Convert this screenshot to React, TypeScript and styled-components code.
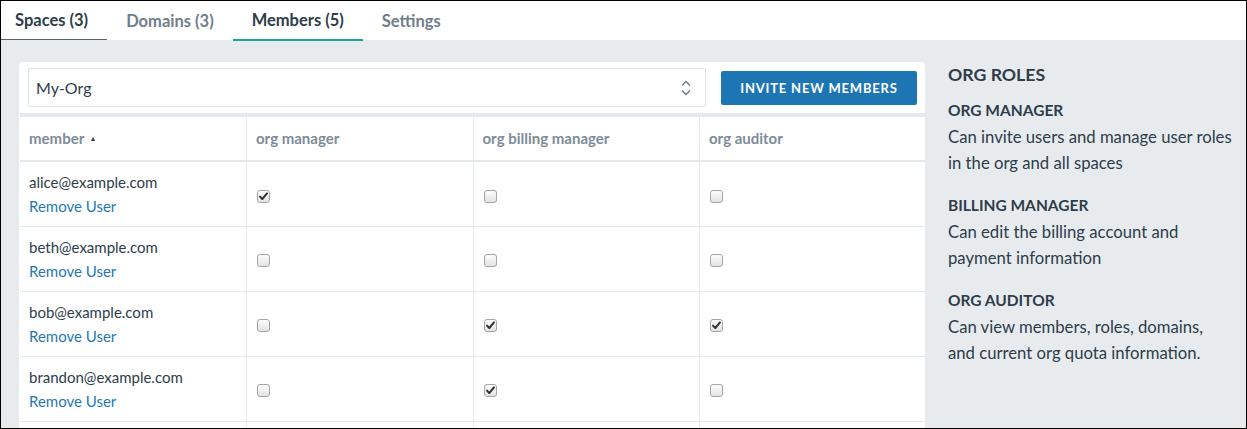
import { styled, createGlobalStyle } from 'styled-components'

const GlobalStyle = createGlobalStyle`
  html, body {
    margin: 0;
    padding: 0;
    background: #fff;
  }
  body {
    font-family: Lato, "Noto Sans", "Liberation Sans", sans-serif;
    color: #2e3d4a;
  }
  * {
    box-sizing: border-box;
  }
`

type Member = {
  email: string
  manager: boolean
  billing: boolean
  auditor: boolean
}

const members: Member[] = [
  { email: 'alice@example.com', manager: true, billing: false, auditor: false },
  { email: 'beth@example.com', manager: false, billing: false, auditor: false },
  { email: 'bob@example.com', manager: false, billing: true, auditor: true },
  { email: 'brandon@example.com', manager: false, billing: true, auditor: false },
  { email: 'carol@example.com', manager: false, billing: false, auditor: false },
]

const roles = [
  {
    title: 'ORG MANAGER',
    text: 'Can invite users and manage user roles in the org and all spaces',
  },
  {
    title: 'BILLING MANAGER',
    text: 'Can edit the billing account and payment information',
  },
  {
    title: 'ORG AUDITOR',
    text: 'Can view members, roles, domains, and current org quota information.',
  },
]

function Checkbox({ checked }: { checked: boolean }) {
  return (
    <Box>
      {checked && (
        <svg width="11" height="11" viewBox="0 0 11 11">
          <path d="M2 5.6 L4.3 8 L9 2.4" fill="none" stroke="#333" strokeWidth="2" strokeLinecap="round" strokeLinejoin="round" />
        </svg>
      )}
    </Box>
  )
}

function App() {
  return (
    <Frame>
      <GlobalStyle />
      <Tabs>
        <Tab $first $state="muted-active">Spaces (3)</Tab>
        <Tab>Domains (3)</Tab>
        <Tab $state="active">Members (5)</Tab>
        <Tab>Settings</Tab>
      </Tabs>

      <Content>
        <Main>
          <Card>
            <Controls>
              <Select>
                <span>My-Org</span>
                <svg width="12" height="18" viewBox="0 0 12 18">
                  <path d="M2 6.5 L6 2.5 L10 6.5 M2 11.5 L6 15.5 L10 11.5" fill="none" stroke="#6b7a87" strokeWidth="1.4" />
                </svg>
              </Select>
              <InviteButton>Invite new members</InviteButton>
            </Controls>

            <Table>
              <thead>
                <tr>
                  <Th>
                    member <SortArrow>▲</SortArrow>
                  </Th>
                  <Th>org manager</Th>
                  <Th>org billing manager</Th>
                  <Th>org auditor</Th>
                </tr>
              </thead>
              <tbody>
                {members.map((m) => (
                  <tr key={m.email}>
                    <Td>
                      <Email>{m.email}</Email>
                      <RemoveLink href="#">Remove User</RemoveLink>
                    </Td>
                    <Td>
                      <Checkbox checked={m.manager} />
                    </Td>
                    <Td>
                      <Checkbox checked={m.billing} />
                    </Td>
                    <Td>
                      <Checkbox checked={m.auditor} />
                    </Td>
                  </tr>
                ))}
              </tbody>
            </Table>
          </Card>
        </Main>

        <Sidebar>
          <SideTitle>ORG ROLES</SideTitle>
          {roles.map((r) => (
            <Role key={r.title}>
              <RoleTitle>{r.title}</RoleTitle>
              <RoleText>{r.text}</RoleText>
            </Role>
          ))}
        </Sidebar>
      </Content>
    </Frame>
  )
}

const Frame = styled.div`
  width: 1247px;
  height: 429px;
  border: 1px solid #000;
  overflow: hidden;
  display: flex;
  flex-direction: column;
  background: #e7ebee;
`

const Tabs = styled.nav`
  height: 39px;
  flex: none;
  display: flex;
  align-items: stretch;
  background: #fff;
`

const Tab = styled.div<{ $state?: 'active' | 'muted-active'; $first?: boolean }>`
  display: flex;
  align-items: center;
  padding-left: ${({ $first }) => ($first ? '14px' : '19px')};
  padding-right: ${({ $first }) => ($first ? '19px' : '19px')};
  font-size: 16.5px;
  font-weight: 700;
  color: ${({ $state }) => ($state ? '#2e3d4a' : '#6f7e8b')};
  border-bottom: ${({ $state }) =>
    $state === 'active' ? '2px solid #1fa595' : $state === 'muted-active' ? '1px solid #54636f' : '0'};
  margin-bottom: ${({ $state }) => ($state === 'active' ? '-1px' : '0')};
`

const Content = styled.div`
  flex: 1;
  display: flex;
  min-height: 0;
`

const Main = styled.main`
  width: 924px;
  flex: none;
  padding: 22px 0 0 18px;
`

const Card = styled.section`
  background: #fff;
  border-radius: 4px 4px 0 0;
  height: 100%;
  overflow: hidden;
`

const Controls = styled.div`
  display: flex;
  align-items: center;
  gap: 15px;
  padding: 6px 8px 6px 9px;
`

const Select = styled.div`
  flex: 1;
  height: 39px;
  border: 1px solid #dce2e7;
  border-radius: 2px;
  display: flex;
  align-items: center;
  justify-content: space-between;
  padding: 0 13px 0 7px;
  font-size: 16px;
  color: #2e3d4a;
`

const InviteButton = styled.button`
  width: 196px;
  height: 34px;
  border: 0;
  border-radius: 2px;
  background: #1d76b3;
  color: #fff;
  font-family: inherit;
  font-size: 13px;
  font-weight: 700;
  letter-spacing: 0.8px;
  text-transform: uppercase;
`

const Table = styled.table`
  width: 100%;
  border-collapse: collapse;
  border-top: 4px solid #e4e9ed;
  margin-left: 1px;
`

const Th = styled.th`
  height: 46px;
  text-align: left;
  padding: 0 9px 1px;
  font-size: 15px;
  font-weight: 700;
  color: #7d8c98;
  border-bottom: 2px solid #e4e9ed;
  border-left: 1px solid #e4e9ed;
  width: 25%;

  &:first-child {
    border-left: 0;
  }
`

const SortArrow = styled.span`
  font-size: 7px;
  vertical-align: 3px;
  margin-left: 2px;
  color: #2e3d4a;
`

const Td = styled.td`
  height: 65px;
  padding: 9px 9px 0;
  vertical-align: top;
  border-bottom: 1px solid #e4e9ed;
  border-left: 1px solid #e4e9ed;

  &:first-child {
    border-left: 0;
  }
  &:not(:first-child) {
    vertical-align: middle;
    padding-top: 0;
  }
`

const Email = styled.div`
  font-size: 15px;
  line-height: 22px;
  color: #2e3d4a;
`

const RemoveLink = styled.a`
  display: block;
  font-size: 15px;
  line-height: 26px;
  color: #1f78b4;
  text-decoration: none;
`

const Box = styled.span`
  display: inline-flex;
  align-items: center;
  justify-content: center;
  width: 13px;
  height: 13px;
  margin-left: 1px;
  border: 1px solid #a5a5a5;
  border-radius: 3px;
  background: linear-gradient(#fcfcfc, #e3e3e3);
  vertical-align: middle;
`

const Sidebar = styled.aside`
  flex: 1;
  padding: 22px 12px 0 23px;
`

const SideTitle = styled.h2`
  margin: 0 0 9px;
  font-size: 17.7px;
  line-height: 26px;
  font-weight: 700;
  color: #2e3d4a;
`

const Role = styled.div`
  margin-bottom: 16px;
`

const RoleTitle = styled.h3`
  margin: 0;
  font-size: 15.5px;
  line-height: 26px;
  font-weight: 700;
  color: #2e3d4a;
`

const RoleText = styled.p`
  margin: 1px 0 0;
  font-size: 16.7px;
  line-height: 26px;
  color: #2e3d4a;
`

export default App
